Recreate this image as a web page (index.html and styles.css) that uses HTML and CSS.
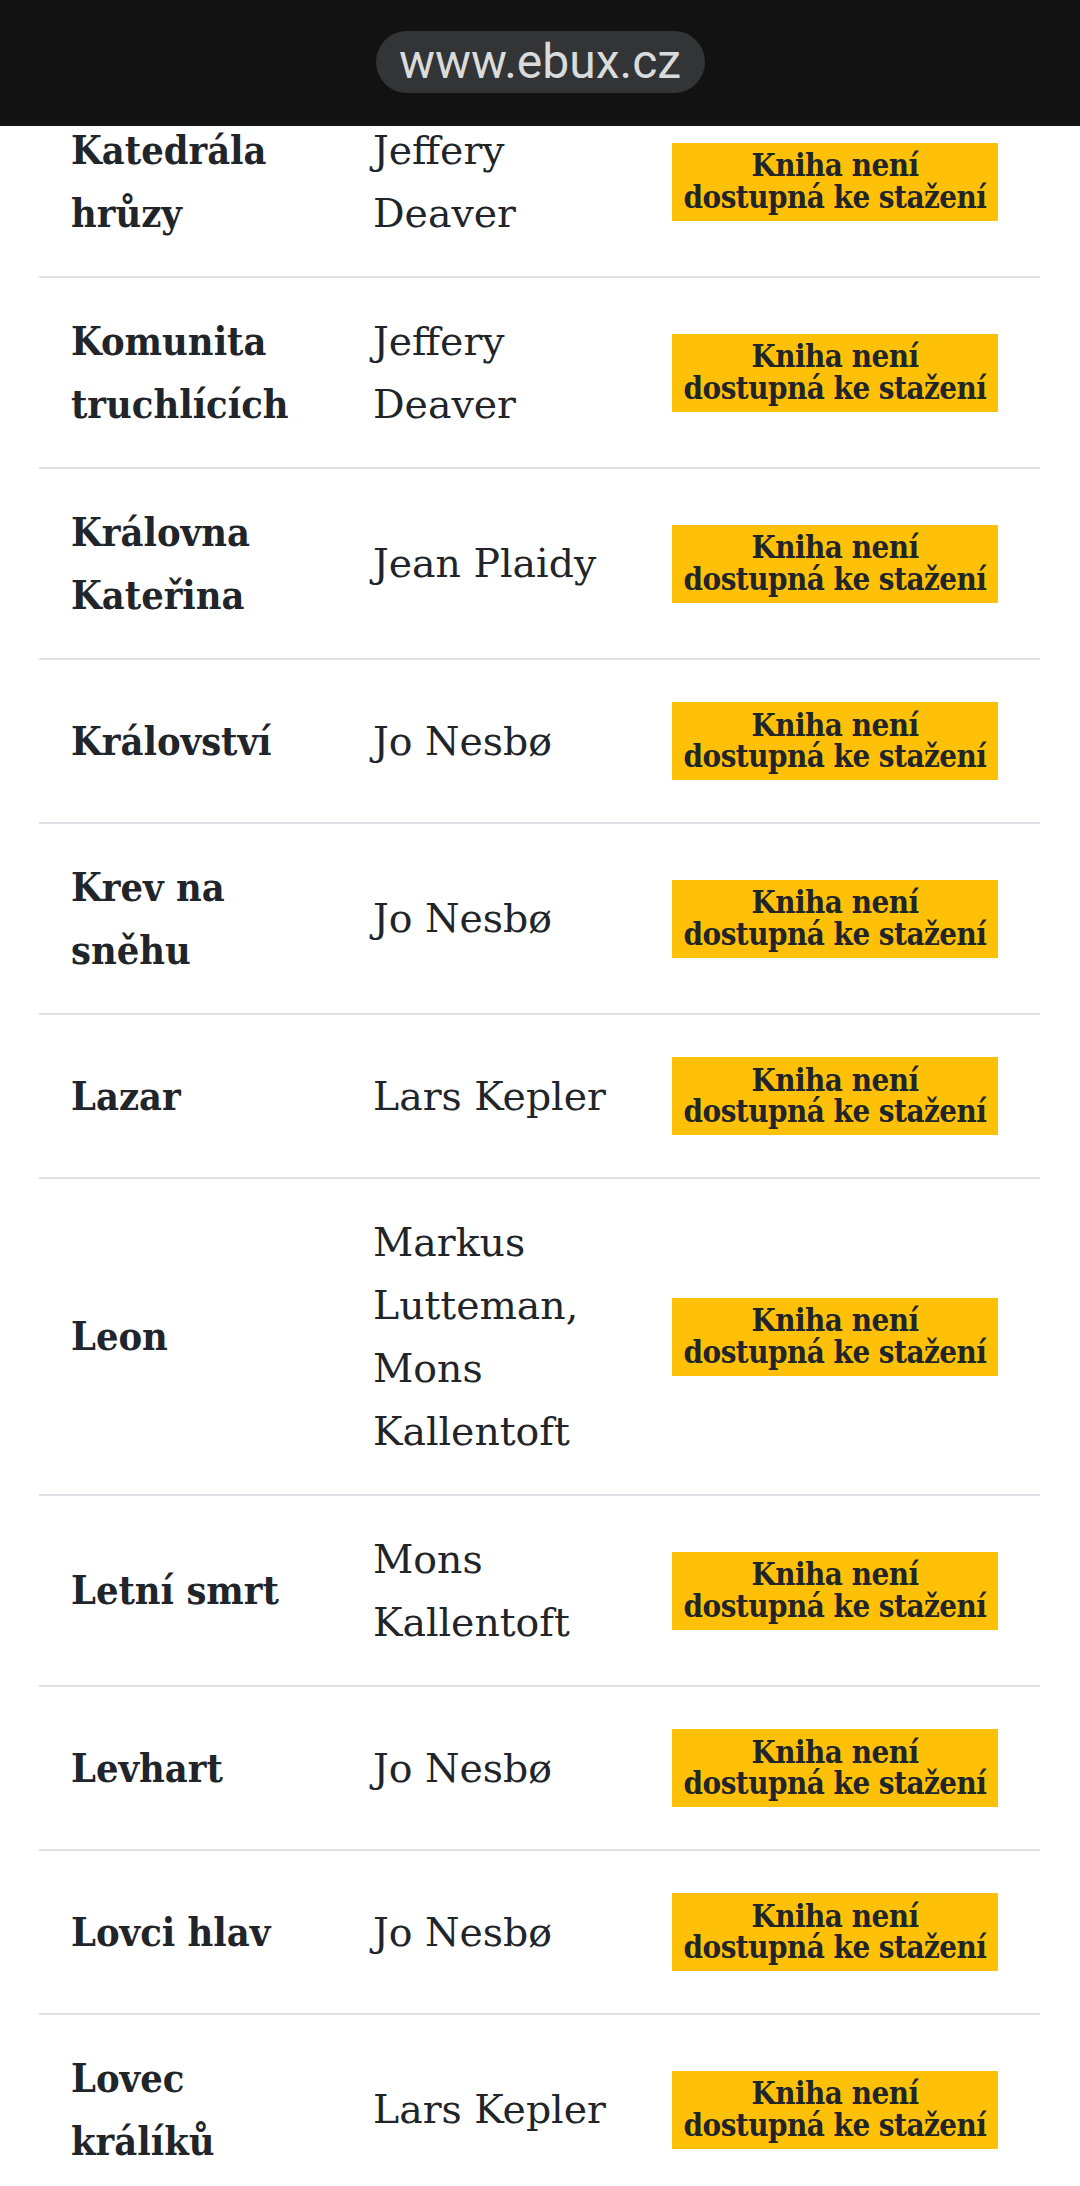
FILE: index.html
```html
<!DOCTYPE html>
<html lang="cs">
<head>
<meta charset="utf-8">
<title>ebux.cz</title>
<link rel="stylesheet" href="styles.css">
</head>
<body>
<header class="topbar">
  <div class="url-pill">www.ebux.cz</div>
</header>
<main class="page">
  <div class="book-table">
    <div class="row">
      <div class="cell title">Katedrála hrůzy</div>
      <div class="cell author">Jeffery Deaver</div>
      <div class="cell action"><span class="badge">Kniha není dostupná ke stažení</span></div>
    </div>
    <div class="row">
      <div class="cell title">Komunita truchlících</div>
      <div class="cell author">Jeffery Deaver</div>
      <div class="cell action"><span class="badge">Kniha není dostupná ke stažení</span></div>
    </div>
    <div class="row">
      <div class="cell title">Královna Kateřina</div>
      <div class="cell author">Jean Plaidy</div>
      <div class="cell action"><span class="badge">Kniha není dostupná ke stažení</span></div>
    </div>
    <div class="row">
      <div class="cell title">Království</div>
      <div class="cell author">Jo Nesbø</div>
      <div class="cell action"><span class="badge">Kniha není dostupná ke stažení</span></div>
    </div>
    <div class="row">
      <div class="cell title">Krev na sněhu</div>
      <div class="cell author">Jo Nesbø</div>
      <div class="cell action"><span class="badge">Kniha není dostupná ke stažení</span></div>
    </div>
    <div class="row">
      <div class="cell title">Lazar</div>
      <div class="cell author">Lars Kepler</div>
      <div class="cell action"><span class="badge">Kniha není dostupná ke stažení</span></div>
    </div>
    <div class="row">
      <div class="cell title">Leon</div>
      <div class="cell author">Markus Lutteman, Mons Kallentoft</div>
      <div class="cell action"><span class="badge">Kniha není dostupná ke stažení</span></div>
    </div>
    <div class="row">
      <div class="cell title">Letní smrt</div>
      <div class="cell author">Mons Kallentoft</div>
      <div class="cell action"><span class="badge">Kniha není dostupná ke stažení</span></div>
    </div>
    <div class="row">
      <div class="cell title">Levhart</div>
      <div class="cell author">Jo Nesbø</div>
      <div class="cell action"><span class="badge">Kniha není dostupná ke stažení</span></div>
    </div>
    <div class="row">
      <div class="cell title">Lovci hlav</div>
      <div class="cell author">Jo Nesbø</div>
      <div class="cell action"><span class="badge">Kniha není dostupná ke stažení</span></div>
    </div>
    <div class="row">
      <div class="cell title">Lovec králíků</div>
      <div class="cell author">Lars Kepler</div>
      <div class="cell action"><span class="badge">Kniha není dostupná ke stažení</span></div>
    </div>
  </div>
</main>
</body>
</html>
```

FILE: styles.css
```css
html, body {
  margin: 0;
  padding: 0;
  background: #ffffff;
}

body {
  font-family: "DejaVu Serif Condensed", "DejaVu Serif", serif;
  color: #212529;
}

.topbar {
  position: fixed;
  top: 0;
  left: 0;
  right: 0;
  height: 126px;
  background: #121212;
  display: flex;
  align-items: center;
  justify-content: center;
  z-index: 10;
}

.url-pill {
  width: 329px;
  height: 62px;
  border-radius: 31px;
  background: #323435;
  color: #d9dbdc;
  font-family: Roboto, "Noto Sans", sans-serif;
  font-size: 48px;
  line-height: 62px;
  text-align: center;
  margin-top: -2px;
}

.page {
  padding: 87px 40px 0 39px;
}

.book-table {
  display: flex;
  flex-direction: column;
}

.row {
  display: grid;
  grid-template-columns: 302px 299px 400px;
  align-items: center;
  border-bottom: 2px solid #dee2e6;
}

.cell {
  padding: 31.5px 32px;
  font-size: 39.4px;
  line-height: 63px;
}

.title {
  font-weight: 700;
}

.author {
  font-family: "DejaVu Serif", serif;
  font-weight: 400;
}

.action {
  display: flex;
}

.badge {
  display: block;
  width: 326px;
  box-sizing: border-box;
  margin: 10.5px 0;
  padding: 7.5px 10px;
  background: #ffc107;
  color: #212529;
  font-weight: 700;
  font-size: 31px;
  letter-spacing: -0.5px;
  line-height: 31.5px;
  text-align: center;
}
```
